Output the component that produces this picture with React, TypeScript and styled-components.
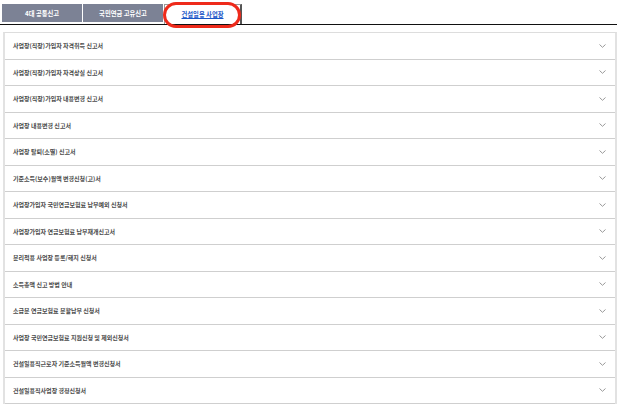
import React from "react";
import styled, { createGlobalStyle } from "styled-components";

const Global = createGlobalStyle`
  html, body { margin: 0; padding: 0; background: #fff; }
  body { font-family: "Noto Sans CJK KR", "Noto Sans", sans-serif; }
`;

const Page = styled.div`
  width: 619px;
  height: 407px;
  overflow: hidden;
  display: flex;
  flex-direction: column;
`;

const TabBar = styled.div`
  display: flex;
  align-items: flex-end;
  gap: 1px;
  padding: 4px 0 0 2px;
  width: 615px;
  height: 20px;
  border-bottom: 1px solid #111;
  box-sizing: content-box;
`;

const Tab = styled.div<{ $active?: boolean }>`
  position: relative;
  width: ${(p) => (p.$active ? 78 : 80)}px;
  height: ${(p) => (p.$active ? 20 : 18)}px;
  margin-bottom: ${(p) => (p.$active ? 0 : 2)}px;
  box-sizing: border-box;
  display: flex;
  align-items: center;
  justify-content: center;
  font-size: 6.3px;
  font-weight: 700;
  color: ${(p) => (p.$active ? "#1a56c8" : "#fff")};
  text-decoration: ${(p) => (p.$active ? "underline" : "none")};
  background: ${(p) => (p.$active ? "#fff" : "#7c8295")};
  border: ${(p) => (p.$active ? "1px solid #999" : "none")};
  border-bottom: none;
  border-right: ${(p) => (p.$active ? "2px solid #555" : "none")};
`;

const Highlight = styled.div`
  position: absolute;
  left: -2px;
  top: -3px;
  width: 78px;
  height: 26px;
  border: 3px solid #ee2a1b;
  border-radius: 13px;
  box-sizing: border-box;
  pointer-events: none;
`;

const List = styled.div`
  margin: 7px 0 0 3px;
  width: 614px;
  border-left: 2px solid #e2e2e2;
  border-right: 2px solid #e2e2e2;
  border-top: 1px solid #ddd;
  box-sizing: border-box;
  display: flex;
  flex-direction: column;
`;

const Row = styled.div`
  height: 26.5px;
  box-sizing: border-box;
  border-bottom: 1px solid #cfcfcf;
  display: flex;
  align-items: center;
  justify-content: space-between;
  padding: 0 9px 0 8px;
`;

const Label = styled.span`
  font-size: 6px;
  font-weight: 700;
  color: #4a4a4a;
  letter-spacing: 0;
`;

const Chevron = () => (
  <svg width="7" height="4" viewBox="0 0 7 4">
    <path d="M0.5 0.5 L3.5 3.3 L6.5 0.5" fill="none" stroke="#999" strokeWidth="1" />
  </svg>
);

const items = [
  "사업장(직장)가입자 자격취득 신고서",
  "사업장(직장)가입자 자격상실 신고서",
  "사업장(직장)가입자 내용변경 신고서",
  "사업장 내용변경 신고서",
  "사업장 탈퇴(소멸) 신고서",
  "기준소득(보수)월액 변경신청(고)서",
  "사업장가입자 국민연금보험료 납부예외 신청서",
  "사업장가입자 연금보험료 납부재개신고서",
  "분리적용 사업장 등록/해지 신청서",
  "소득총액 신고 방법 안내",
  "소급분 연금보험료 분할납부 신청서",
  "사업장 국민연금보험료 지원신청 및 제외신청서",
  "건설일용직근로자 기준소득월액 변경신청서",
  "건설일용직사업장 경정신청서",
];

export default function App() {
  return (
    <Page>
      <Global />
      <TabBar>
        <Tab>4대 공통신고</Tab>
        <Tab>국민연금 고유신고</Tab>
        <Tab $active>
          건설일용 사업장
          <Highlight />
        </Tab>
      </TabBar>
      <List>
        {items.map((t) => (
          <Row key={t}>
            <Label>{t}</Label>
            <Chevron />
          </Row>
        ))}
      </List>
    </Page>
  );
}
